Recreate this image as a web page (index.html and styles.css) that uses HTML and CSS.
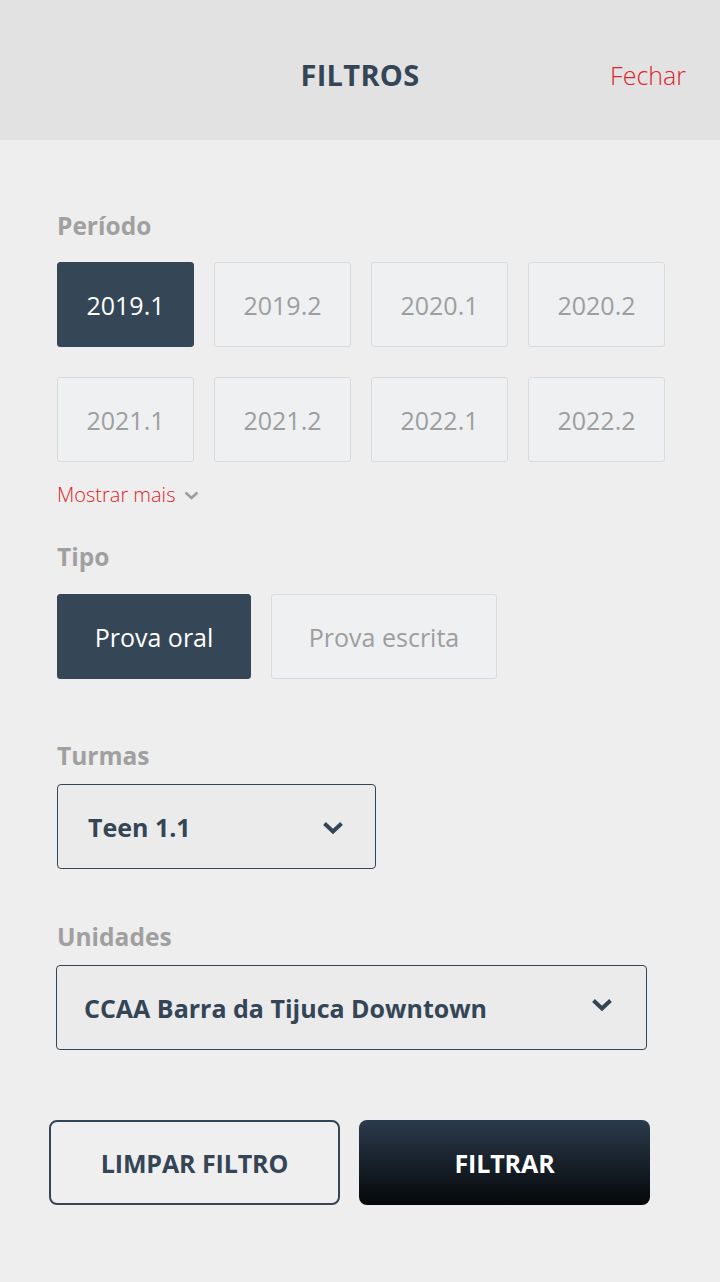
FILE: index.html
```html
<!DOCTYPE html>
<html lang="pt-BR">
<head>
<meta charset="utf-8">
<title>Filtros</title>
<link rel="stylesheet" href="styles.css">
</head>
<body>
<div class="screen">
  <header class="header">
    <span></span>
    <h1 class="title">FILTROS</h1>
    <a class="close">Fechar</a>
  </header>
  <main class="content">
    <h2 class="label">Período</h2>
    <div class="periods">
      <button class="chip active">2019.1</button>
      <button class="chip">2019.2</button>
      <button class="chip">2020.1</button>
      <button class="chip">2020.2</button>
      <button class="chip">2021.1</button>
      <button class="chip">2021.2</button>
      <button class="chip">2022.1</button>
      <button class="chip">2022.2</button>
    </div>
    <a class="more">Mostrar mais
      <svg class="more-icon" width="15" height="9" viewBox="0 0 15 9"><path d="M1.5 1.5 L7.5 7 L13.5 1.5" fill="none" stroke="#9e9e9e" stroke-width="2.6"/></svg>
    </a>
    <h2 class="label label-tipo">Tipo</h2>
    <div class="types">
      <button class="chip active type-oral">Prova oral</button>
      <button class="chip type-escrita">Prova escrita</button>
    </div>
    <h2 class="label label-turmas">Turmas</h2>
    <div class="select select-turmas">
      <span class="select-text">Teen 1.1</span>
      <svg class="chev" width="22" height="14" viewBox="0 0 22 14"><path d="M2.5 2.5 L11 10.5 L19.5 2.5" fill="none" stroke="#344556" stroke-width="4"/></svg>
    </div>
    <h2 class="label label-unidades">Unidades</h2>
    <div class="select select-unidades">
      <span class="select-text">CCAA Barra da Tijuca Downtown</span>
      <svg class="chev" width="22" height="14" viewBox="0 0 22 14"><path d="M2.5 2.5 L11 10.5 L19.5 2.5" fill="none" stroke="#344556" stroke-width="4"/></svg>
    </div>
    <div class="actions">
      <button class="btn btn-outline">LIMPAR FILTRO</button>
      <button class="btn btn-solid">FILTRAR</button>
    </div>
  </main>
</div>
</body>
</html>
```
FILE: styles.css
```css
* { box-sizing: border-box; }
html, body { margin: 0; padding: 0; }
body {
  font-family: "Open Sans", "Noto Sans", sans-serif;
  background: #eeeeee;
  width: 720px;
  height: 1282px;
  overflow: hidden;
}
.screen { width: 720px; min-height: 1282px; background: #eeeeee; }

.header {
  height: 140px;
  background: #e2e2e2;
  display: grid;
  grid-template-columns: 1fr auto 1fr;
  align-items: start;
  padding: 56px 34px 0 34px;
}
.title {
  margin: 0;
  font-size: 29px;
  line-height: 38px;
  font-weight: 700;
  color: #344556;
  letter-spacing: 0.3px;
}
.close {
  justify-self: end;
  font-size: 25px;
  line-height: 38px;
  font-weight: 300;
  color: #e0232c;
  margin-top: 0;
}

.content {
  padding: 70px 0 0 57px;
  display: flex;
  flex-direction: column;
  align-items: flex-start;
}
.label {
  margin: 0;
  font-size: 24.5px;
  line-height: 32px;
  font-weight: 700;
  color: #a0a0a0;
}
.periods {
  margin-top: 20px;
  display: grid;
  grid-template-columns: repeat(4, 137px);
  gap: 30px 20px;
}
.chip {
  height: 85px;
  border: 1px solid #d9dadc;
  border-radius: 3px;
  background: #eff0f2;
  color: #9e9e9e;
  font-family: "Open Sans", "Noto Sans", sans-serif;
  font-size: 25px;
  font-weight: 400;
  padding: 0;
  display: flex;
  align-items: center;
  justify-content: center;
}
.chip.active {
  background: #354657;
  border-color: #354657;
  color: #ffffff;
}
.more {
  margin-top: 19px;
  font-size: 20px;
  line-height: 28px;
  font-weight: 300;
  color: #e0232c;
  display: flex;
  align-items: center;
  gap: 9px;
}
.more-icon { margin-top: 1px; }
.label-tipo { margin-top: 32px; }
.types {
  margin-top: 21px;
  display: flex;
  gap: 20px;
}
.type-oral { width: 194px; }
.type-escrita { width: 226px; }
.label-turmas { margin-top: 61px; }
.select {
  margin-top: 12px;
  height: 85px;
  border: 1px solid #344556;
  border-radius: 4px;
  background: #ebebeb;
  display: flex;
  align-items: center;
  justify-content: space-between;
}
.select-text {
  font-size: 25px;
  font-weight: 700;
  color: #344556;
}
.select-turmas { width: 319px; padding: 0 31px 0 30px; }
.select-turmas .chev { margin-top: 3px; }
.label-unidades { margin-top: 52px; }
.select-unidades { width: 591px; margin-left: -1px; padding: 0 33px 0 27px; }
.select-unidades .chev { margin-top: -5px; }

.actions {
  margin-top: 70px;
  margin-left: -8px;
  display: flex;
  gap: 19px;
}
.btn {
  width: 291px;
  height: 85px;
  border-radius: 8px;
  font-family: "Open Sans", "Noto Sans", sans-serif;
  font-size: 25px;
  font-weight: 700;
  letter-spacing: -0.1px;
  padding: 0;
}
.btn-outline {
  background: #efefef;
  border: 2px solid #344556;
  color: #344556;
}
.btn-solid {
  background: linear-gradient(180deg, #2b3b4d 0%, #050709 100%);
  border: none;
  color: #ffffff;
}
```
